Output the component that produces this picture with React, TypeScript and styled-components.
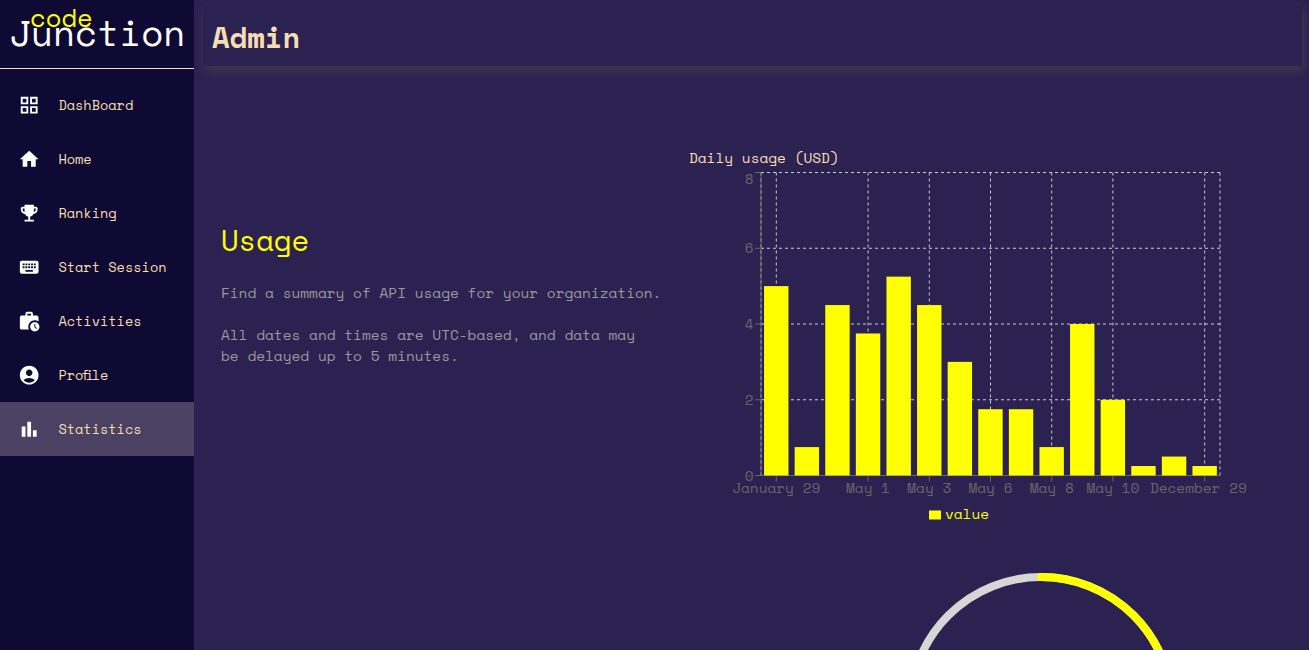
import React from "react";
import styled, { createGlobalStyle } from "styled-components";
import {
  MdAccountCircle,
  MdBarChart,
  MdEmojiEvents,
  MdGridView,
  MdHome,
  MdKeyboard,
  MdWorkHistory,
} from "react-icons/md";

const colors = {
  page: "#2c2252",
  sidebar: "#0f0a34",
  active: "#4b4162",
  wheat: "#f5deb3",
  yellow: "#ffff00",
  muted: "#999999",
  axis: "#666666",
};

const GlobalStyle = createGlobalStyle`
  * { box-sizing: border-box; }
  body {
    margin: 0;
    overflow: hidden;
    background: ${colors.page};
    font-family: "Space Mono", "Liberation Mono", monospace;
  }
`;

const Layout = styled.div`
  display: flex;
  height: 100vh;
  overflow: hidden;
`;

const Sidebar = styled.aside`
  flex: 0 0 194px;
  background: ${colors.sidebar};
`;

const Logo = styled.div`
  position: relative;
  height: 69px;
  padding: 13px 0 0 9px;
  border-bottom: 1px solid ${colors.wheat};
  color: #fff;
  font-size: 36px;
  line-height: 40px;
  white-space: nowrap;
`;

const LogoAccent = styled.span`
  position: absolute;
  left: 30px;
  top: 0;
  color: ${colors.yellow};
  font-size: 25.6px;
  line-height: 34px;
`;

const Nav = styled.nav`
  display: flex;
  flex-direction: column;
  padding-top: 9px;
`;

const NavItem = styled.a<{ $active?: boolean }>`
  display: flex;
  align-items: center;
  gap: 18.2px;
  height: 54px;
  padding-left: 17.8px;
  background: ${(p) => (p.$active ? colors.active : "transparent")};
  color: ${colors.wheat};
  font-size: 13.6px;
  white-space: nowrap;

  svg {
    flex: none;
    width: 22.4px;
    height: 22.4px;
    color: #fff;
  }
`;

/* Joins two letters into the width of a single monospace cell. */
const Ligature = styled.span`
  margin: 0 2.1px 0 -2.1px;
  letter-spacing: -4.16px;
`;

const Main = styled.main`
  flex: 1;
  min-width: 0;
  padding: 6px 7px 0 9px;
`;

const Header = styled.header`
  display: flex;
  align-items: center;
  height: 60px;
  padding: 2px 0 0 9px;
  box-shadow: 2px 5px 10px rgba(128, 128, 64, 0.25);
`;

const Title = styled.h1`
  margin: 0;
  color: ${colors.wheat};
  font-size: 28.8px;
  line-height: 36px;
`;

const Content = styled.div`
  display: flex;
  padding-left: 18px;
`;

const Intro = styled.section`
  width: 445px;
  padding-top: 155px;
`;

const Heading = styled.h2`
  margin: 0 0 23px;
  color: ${colors.yellow};
  font-size: 28.8px;
  font-weight: 400;
  line-height: 38px;
`;

const Paragraph = styled.p`
  margin: 0 0 21px;
  color: ${colors.muted};
  font-size: 14.4px;
  line-height: 21px;
`;

const Charts = styled.section`
  display: flex;
  flex-direction: column;
  width: 610px;
  margin-left: 23px;
  padding-top: 82px;
`;

const ChartTitle = styled.div`
  height: 20px;
  color: ${colors.wheat};
  font-size: 14.4px;
  line-height: 20px;
`;

const ChartSvg = styled.svg`
  display: block;
  overflow: visible;

  text {
    fill: ${colors.axis};
    font-size: 14.4px;
  }
`;

const Legend = styled.div`
  display: flex;
  align-items: center;
  gap: 4px;
  height: 20px;
  margin: 3px 0 0 240px;
  color: ${colors.yellow};
  font-size: 14.4px;
`;

const Swatch = styled.svg`
  display: block;
  width: 12px;
  height: 10px;
  margin-top: 4px;
  fill: ${colors.yellow};
`;

const RingSvg = styled.svg`
  display: block;
  margin: 50px 0 0 217px;
`;

const navItems = [
  { id: "dashboard", label: "DashBoard", Icon: MdGridView },
  { id: "home", label: "Home", Icon: MdHome },
  { id: "ranking", label: "Ranking", Icon: MdEmojiEvents },
  { id: "session", label: "Start Session", Icon: MdKeyboard },
  { id: "activities", label: "Activities", Icon: MdWorkHistory },
  {
    id: "profile",
    label: (
      <>
        Pro<Ligature>fi</Ligature>le
      </>
    ),
    Icon: MdAccountCircle,
  },
  { id: "statistics", label: "Statistics", Icon: MdBarChart, active: true },
];

const values = [5, 0.75, 4.5, 3.75, 5.25, 4.5, 3, 1.75, 1.75, 0.75, 4, 2, 0.25, 0.5, 0.25];
const xTicks = [
  { index: 0, label: "January 29" },
  { index: 3, label: "May 1" },
  { index: 5, label: "May 3" },
  { index: 7, label: "May 6" },
  { index: 9, label: "May 8" },
  { index: 11, label: "May 10" },
  { index: 14, label: "December 29", shift: -6.3 },
];
const yTicks = [0, 2, 4, 6, 8];

const plot = { left: 72, right: 531, top: 4.5, bottom: 307.5 };
const step = (plot.right - plot.left) / values.length;
const centerOf = (i: number) => plot.left + step * (i + 0.5);
const yOf = (v: number) => plot.bottom - ((plot.bottom - plot.top) * v) / 8;

function UsageChart() {
  const gridX = [plot.left, ...xTicks.map((t) => centerOf(t.index)), plot.right];
  return (
    <ChartSvg width="610" height="332">
      <g stroke="#ccc" strokeDasharray="3 3">
        {yTicks.map((v) => (
          <line key={v} x1={plot.left} x2={plot.right} y1={yOf(v)} y2={yOf(v)} />
        ))}
        {gridX.map((x) => (
          <line key={x} x1={x} x2={x} y1={plot.top} y2={plot.bottom} />
        ))}
      </g>
      <g stroke={colors.axis}>
        <line x1={plot.left} x2={plot.right} y1={plot.bottom} y2={plot.bottom} />
        <line x1={plot.left} x2={plot.left} y1={plot.top} y2={plot.bottom} />
        {yTicks.map((v) => (
          <line key={v} x1={plot.left - 6} x2={plot.left} y1={yOf(v)} y2={yOf(v)} />
        ))}
        {xTicks.map((t) => (
          <line
            key={t.index}
            x1={centerOf(t.index)}
            x2={centerOf(t.index)}
            y1={plot.bottom}
            y2={plot.bottom + 6}
          />
        ))}
      </g>
      {values.map((v, i) => (
        <rect
          key={i}
          x={centerOf(i) - 12.24}
          y={yOf(v)}
          width={24.4}
          height={plot.bottom - yOf(v)}
          fill={colors.yellow}
        />
      ))}
      {yTicks.map((v) => (
        <text key={v} x={plot.left - 7.5} y={v === 8 ? 16 : yOf(v) + 5} textAnchor="end">
          {v}
        </text>
      ))}
      {xTicks.map((t) => (
        <text key={t.index} x={centerOf(t.index) + (t.shift ?? 0)} y="325" textAnchor="middle">
          {t.label}
        </text>
      ))}
    </ChartSvg>
  );
}

function UsageRing() {
  const r = 131;
  const length = 2 * Math.PI * r;
  return (
    <RingSvg width="270" height="270" viewBox="0 0 270 270">
      <g fill="none" strokeWidth="8">
        <circle cx="135" cy="135" r={r} stroke="#d6d6d6" />
        <circle
          cx="135"
          cy="135"
          r={r}
          stroke={colors.yellow}
          strokeLinecap="round"
          strokeDasharray={`${length * 0.4} ${length}`}
          transform="rotate(-90 135 135)"
        />
      </g>
    </RingSvg>
  );
}

export default function App() {
  return (
    <>
      <GlobalStyle />
      <Layout>
        <Sidebar>
          <Logo>
            Junction
            <LogoAccent>code</LogoAccent>
          </Logo>
          <Nav>
            {navItems.map(({ id, label, Icon, active }) => (
              <NavItem key={id} $active={active}>
                <Icon />
                <span>{label}</span>
              </NavItem>
            ))}
          </Nav>
        </Sidebar>
        <Main>
          <Header>
            <Title>Admin</Title>
          </Header>
          <Content>
            <Intro>
              <Heading>Usage</Heading>
              <Paragraph>Find a summary of API usage for your organization.</Paragraph>
              <Paragraph>
                All dates and times are UTC-based, and data may
                <br />
                be delayed up to 5 minutes.
              </Paragraph>
            </Intro>
            <Charts>
              <ChartTitle>Daily usage (USD)</ChartTitle>
              <UsageChart />
              <Legend>
                <Swatch viewBox="0 0 12 10">
                  <rect y="0.5" width="12" height="9" />
                </Swatch>
                value
              </Legend>
              <UsageRing />
            </Charts>
          </Content>
        </Main>
      </Layout>
    </>
  );
}
